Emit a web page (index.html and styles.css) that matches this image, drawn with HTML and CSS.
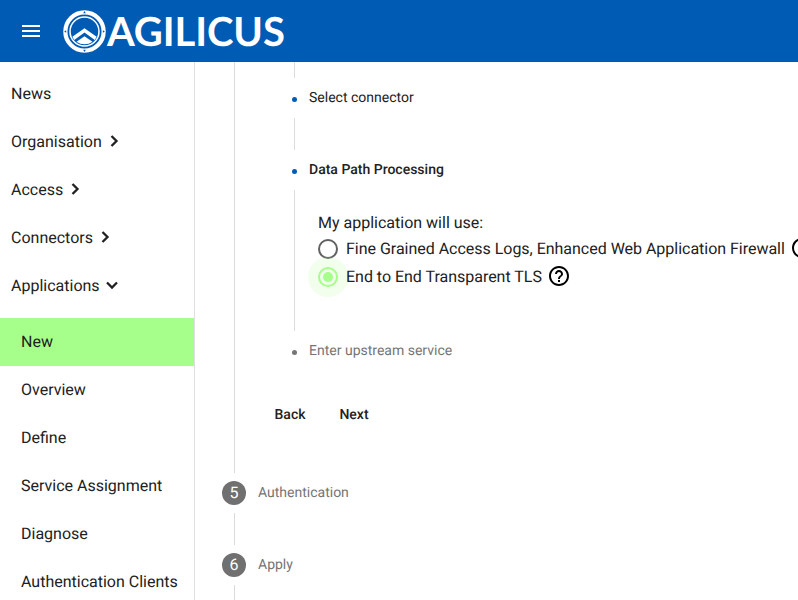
FILE: index.html
```html
<!DOCTYPE html>
<html lang="en">
<head>
    <meta charset="UTF-8">
    <meta name="viewport" content="width=device-width, initial-scale=1.0">
    <title>Agilicus</title>
    <link rel="stylesheet" href="styles.css">
</head>
<body>
  <header class="toolbar">
    <button class="menu-button" aria-label="Menu">
      <svg width="24" height="24" viewBox="0 0 24 24"><path fill="#fff" d="M3 18h18v-2H3v2zm0-5h18v-2H3v2zm0-7v2h18V6H3z"/></svg>
    </button>
    <svg class="logo-mark" width="43" height="43" viewBox="0 0 46 46">
      <circle cx="23" cy="23" r="20.5" fill="none" stroke="#fff" stroke-width="4.5"/>
      <circle cx="23" cy="23" r="15.5" fill="none" stroke="#fff" stroke-width="1.6"/>
      <path fill="#fff" d="M10 28.5 23 19.5 36 28.5 34 32 23 24 12 32z"/>
      <path fill="#fff" d="M14.5 34 23 28 31.5 34A14.5 14.5 0 0 1 14.5 34z"/>
      <path fill="#005bb5" d="M23 1.2l1.4 2.2h-2.8zM23 44.8l-1.4-2.2h2.8zM1.2 23l2.2-1.4v2.8zM44.8 23l-2.2 1.4v-2.8z"/>
    </svg>
    <span class="logo-text">AGILICUS</span>
  </header>

  <div class="layout">
    <nav class="sidenav">
      <a class="nav-item">News</a>
      <a class="nav-item">Organisation <svg class="chev" viewBox="0 0 24 24"><path d="M9 6l6 6-6 6"/></svg></a>
      <a class="nav-item">Access <svg class="chev" viewBox="0 0 24 24"><path d="M9 6l6 6-6 6"/></svg></a>
      <a class="nav-item">Connectors <svg class="chev" viewBox="0 0 24 24"><path d="M9 6l6 6-6 6"/></svg></a>
      <a class="nav-item">Applications <svg class="chev" viewBox="0 0 24 24"><path d="M6 9l6 6 6-6"/></svg></a>
      <div class="subnav">
        <a class="nav-item sub active">New</a>
        <a class="nav-item sub">Overview</a>
        <a class="nav-item sub">Define</a>
        <a class="nav-item sub">Service Assignment</a>
        <a class="nav-item sub">Diagnose</a>
        <a class="nav-item sub">Authentication Clients</a>
      </div>
    </nav>

    <main class="content">
      <div class="step-body">
        <div class="sub-line short"></div>
        <div class="sub-step"><span class="dot"></span>Select connector</div>
        <div class="sub-line"></div>
        <div class="sub-step current"><span class="dot"></span>Data Path Processing</div>
        <div class="sub-body">
          <div class="form-label">My application will use:</div>
          <label class="radio-row">
            <span class="radio"></span>
            <span class="radio-text">Fine Grained Access Logs, Enhanced Web Application Firewall</span>
            <svg class="help" viewBox="0 0 24 24"><path d="M11 18h2v-2h-2v2zm1-16C6.48 2 2 6.48 2 12s4.48 10 10 10 10-4.48 10-10S17.52 2 12 2zm0 18c-4.41 0-8-3.59-8-8s3.59-8 8-8 8 3.59 8 8-3.59 8-8 8zm0-14c-2.21 0-4 1.79-4 4h2c0-1.1.9-2 2-2s2 .9 2 2c0 2-3 1.75-3 5h2c0-2.25 3-2.5 3-5 0-2.21-1.79-4-4-4z"/></svg>
          </label>
          <label class="radio-row">
            <span class="radio checked"></span>
            <span class="radio-text">End to End Transparent TLS</span>
            <svg class="help" viewBox="0 0 24 24"><path d="M11 18h2v-2h-2v2zm1-16C6.48 2 2 6.48 2 12s4.48 10 10 10 10-4.48 10-10S17.52 2 12 2zm0 18c-4.41 0-8-3.59-8-8s3.59-8 8-8 8 3.59 8 8-3.59 8-8 8zm0-14c-2.21 0-4 1.79-4 4h2c0-1.1.9-2 2-2s2 .9 2 2c0 2-3 1.75-3 5h2c0-2.25 3-2.5 3-5 0-2.21-1.79-4-4-4z"/></svg>
          </label>
        </div>
        <div class="sub-step pending"><span class="dot"></span>Enter upstream service</div>
        <div class="actions">
          <button class="text-button">Back</button>
          <button class="text-button">Next</button>
        </div>
      </div>
      <div class="step-header"><span class="step-num">5</span>Authentication</div>
      <div class="step-line"></div>
      <div class="step-header"><span class="step-num">6</span>Apply</div>
      <div class="step-line"></div>
    </main>
  </div>
</body>
</html>
```

FILE: styles.css
```css
html, body{
  margin: 0;
  height: 100%;
  overflow: hidden;
}

body{
  font-family: Roboto, "Liberation Sans", sans-serif;
  color: #212121;
  background-color: white;
  display: flex;
  flex-direction: column;
  text-rendering: geometricPrecision;
}

button{
  font-family: inherit;
  border: none;
  background: none;
  padding: 0;
  text-rendering: geometricPrecision;
}

.toolbar{
  height: 62px;
  flex: none;
  background-color: #005bb5;
  display: flex;
  align-items: center;
  padding-left: 19px;
}

.menu-button{
  width: 24px;
  height: 24px;
}

.logo-mark{
  margin-left: 20px;
}

.logo-text{
  font-family: Lato, sans-serif;
  font-size: 40px;
  font-weight: 700;
  letter-spacing: -0.1px;
  color: white;
  margin-left: 1px;
}

.layout{
  flex: 1;
  display: flex;
  min-height: 0;
}

.sidenav{
  width: 194px;
  flex: none;
  border-right: 1px solid #e0e0e0;
  padding-top: 7px;
}

.nav-item{
  height: 48px;
  display: flex;
  align-items: center;
  padding-left: 11px;
  font-size: 16px;
  color: #212121;
  white-space: nowrap;
}

.chev{
  width: 20px;
  height: 20px;
  margin-left: 2px;
  fill: none;
  stroke: #212121;
  stroke-width: 2.8;
}

.subnav{
  padding-top: 9px;
}

.sub{
  padding-left: 21px;
  padding-bottom: 1px;
  height: 47px;
}

.active{
  background-color: #a5ff8a;
}

.content{
  flex: 1;
  min-width: 0;
  overflow: hidden;
  padding-left: 39px;
  font-size: 14px;
}

.step-body{
  height: 411px;
  border-left: 1px solid #dcdcdc;
  padding-left: 59px;
  box-sizing: border-box;
}

.sub-line{
  width: 1px;
  height: 32px;
  background-color: #dcdcdc;
}

.short{
  height: 16px;
}

.sub-step{
  height: 39px;
  padding-bottom: 1px;
  display: flex;
  align-items: center;
  white-space: nowrap;
  color: #212121;
  margin-left: -3px;
}

.dot{
  width: 5px;
  height: 5px;
  border-radius: 50%;
  background-color: #005bb5;
  margin-left: 1px;
  margin-right: 12px;
  margin-top: 3px;
}

.current{
  font-weight: 500;
}

.pending{
  color: #757575;
}

.pending .dot{
  background-color: #757575;
}

.sub-body{
  height: 141px;
  border-left: 1px solid #dcdcdc;
  padding: 21px 0 0 23px;
  box-sizing: border-box;
  font-size: 16px;
  white-space: nowrap;
}

.form-label{
  height: 24px;
  line-height: 24px;
}

.radio-row{
  height: 28px;
  display: flex;
  align-items: center;
}

.radio{
  width: 16px;
  height: 16px;
  border: 2px solid #616161;
  border-radius: 50%;
  margin-right: 8px;
  position: relative;
  flex: none;
}

.checked{
  border-color: #a5ff8a;
}

.checked::before{
  content: "";
  position: absolute;
  left: -12px;
  top: -12px;
  width: 40px;
  height: 40px;
  border-radius: 50%;
  background-color: rgba(165, 255, 138, 0.16);
}

.checked::after{
  content: "";
  position: absolute;
  left: 3px;
  top: 3px;
  width: 10px;
  height: 10px;
  border-radius: 50%;
  background-color: #a5ff8a;
}

.radio-text{
  position: relative;
  top: -0.5px;
  letter-spacing: -0.02px;
}

.help{
  width: 24px;
  height: 24px;
  margin-left: 5px;
  margin-bottom: 3px;
  flex: none;
}

.actions{
  display: flex;
  margin-left: -36px;
  padding-top: 26px;
}

.text-button{
  font-size: 14px;
  font-weight: 500;
  color: #212121;
  height: 36px;
  width: 64px;
  text-align: center;
}

.step-header{
  height: 39px;
  padding-bottom: 1px;
  display: flex;
  align-items: center;
  margin-left: -12px;
  color: #757575;
}

.step-num{
  width: 24px;
  height: 24px;
  border-radius: 50%;
  background-color: #707070;
  color: white;
  font-size: 16px;
  display: flex;
  align-items: center;
  justify-content: center;
  margin-right: 12px;
}

.step-line{
  width: 1px;
  height: 32px;
  background-color: #dcdcdc;
}
```
